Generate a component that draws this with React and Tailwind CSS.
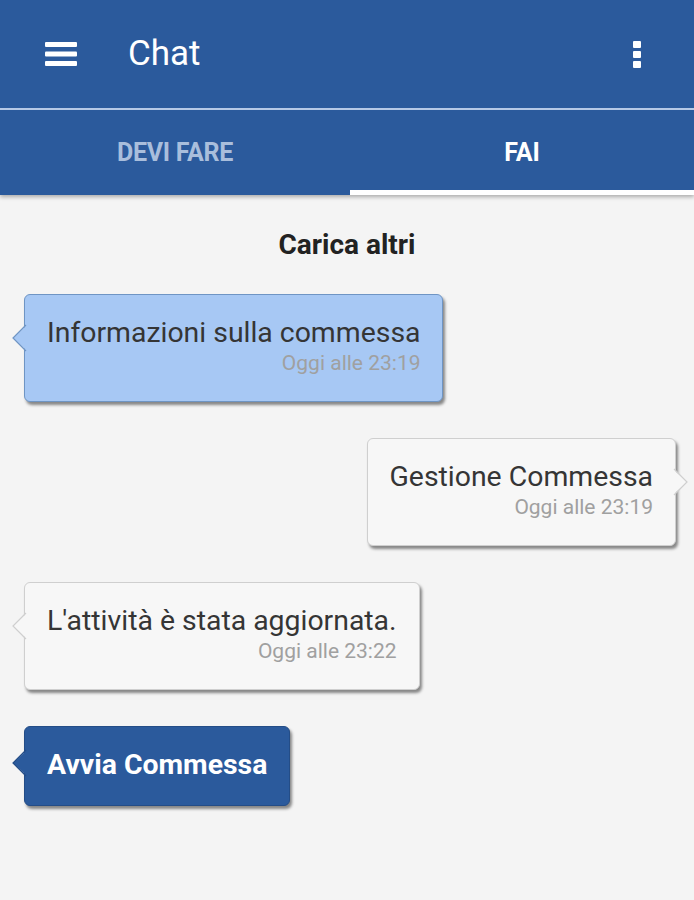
import React from "react";

function Tail({ side, fill, stroke, top }) {
  if (side === "left") {
    return (
      <svg
        className="absolute"
        style={{ left: -14, top }}
        width="16"
        height="28"
        viewBox="0 0 16 28"
      >
        <polygon points="16,1 2,14 16,27" fill={fill} />
        <polyline points="15,1 2,14 15,27" fill="none" stroke={stroke} strokeWidth="1.2" />
      </svg>
    );
  }
  return (
    <svg
      className="absolute"
      style={{ right: -14, top }}
      width="16"
      height="28"
      viewBox="0 0 16 28"
    >
      <polygon points="0,1 14,14 0,27" fill={fill} />
      <polyline points="1,1 14,14 1,27" fill="none" stroke={stroke} strokeWidth="1.2" />
    </svg>
  );
}

function Bubble({ side, variant, text, time }) {
  const styles = {
    blue: { bg: "bg-[#a7c8f4]", border: "border-[#6f95c4]", fill: "#a7c8f4", stroke: "#6f95c4" },
    white: { bg: "bg-[#f7f7f7]", border: "border-[#cfcfcf]", fill: "#f7f7f7", stroke: "#cfcfcf" },
    dark: { bg: "bg-[#2b5a9c]", border: "border-[#244d87]", fill: "#2b5a9c", stroke: "#244d87" },
  }[variant];
  return (
    <div className={`flex ${side === "left" ? "justify-start pl-[24px]" : "justify-end pr-[18px]"}`}>
      <div
        className={`relative rounded-[6px] border ${styles.bg} ${styles.border} shadow-[2px_3px_3px_rgba(0,0,0,0.45)] px-[22px] pt-[23px] ${time ? "pb-[26px]" : "pb-[25px]"}`}
      >
        <Tail side={side} fill={styles.fill} stroke={styles.stroke} top={time ? 29 : 22} />
        {variant === "dark" ? (
          <div className="text-[28.4px] leading-[30px] font-bold text-white whitespace-nowrap">{text}</div>
        ) : (
          <div className="text-[28.4px] leading-[30px] text-[#353535] whitespace-nowrap">{text}</div>
        )}
        {time && (
          <div className="text-right text-[21px] leading-[24px] text-[#a0a0a0] mt-[3px] whitespace-nowrap">{time}</div>
        )}
      </div>
    </div>
  );
}

export default function App() {
  return (
    <div
      className="w-[694px] h-[900px] bg-[#f4f4f4] overflow-hidden"
      style={{ fontFamily: "Roboto, 'Noto Sans', sans-serif" }}
    >
      <div className="relative z-10 shadow-[0_2px_4px_rgba(0,0,0,0.3)]">
        <div className="h-[108px] bg-[#2b5a9c] flex items-center">
          <div className="w-[128px] flex pl-[45px]">
            <svg width="32" height="26" viewBox="0 0 32 26">
              <rect x="0" y="1" width="32" height="5" rx="1" fill="white" />
              <rect x="0" y="10.5" width="32" height="5" rx="1" fill="white" />
              <rect x="0" y="20" width="32" height="5" rx="1" fill="white" />
            </svg>
          </div>
          <div className="flex-1 text-white text-[35px] leading-none -mt-[2px]">Chat</div>
          <div className="pr-[53px] flex flex-col gap-[3px]">
            <div className="w-[8px] h-[7px] bg-white rounded-[1px]" />
            <div className="w-[8px] h-[7px] bg-white rounded-[1px]" />
            <div className="w-[8px] h-[7px] bg-white rounded-[1px]" />
          </div>
        </div>
        <div className="h-[2px] bg-[#b6c9e6]" />
        <div className="h-[85px] bg-[#2b5a9c] flex">
          <div className="flex-1 flex flex-col">
            <div className="flex-1 flex items-center justify-center pt-[6px] text-[25px] font-bold text-[#a9bedc] tracking-[-0.3px]">
              DEVI FARE
            </div>
            <div className="h-[5px]" />
          </div>
          <div className="w-[344px] flex flex-col">
            <div className="flex-1 flex items-center justify-center pt-[6px] text-[25px] font-bold text-white">FAI</div>
            <div className="h-[5px] bg-white" />
          </div>
        </div>
      </div>

      <div className="pt-[35px] text-center text-[28px] font-bold text-[#222] leading-[30px]">Carica altri</div>

      <div className="mt-[34px] flex flex-col gap-[36px]">
        <Bubble side="left" variant="blue" text="Informazioni sulla commessa" time="Oggi alle 23:19" />
        <Bubble side="right" variant="white" text="Gestione Commessa" time="Oggi alle 23:19" />
        <Bubble side="left" variant="white" text="L'attività è stata aggiornata." time="Oggi alle 23:22" />
        <Bubble side="left" variant="dark" text="Avvia Commessa" />
      </div>
    </div>
  );
}
